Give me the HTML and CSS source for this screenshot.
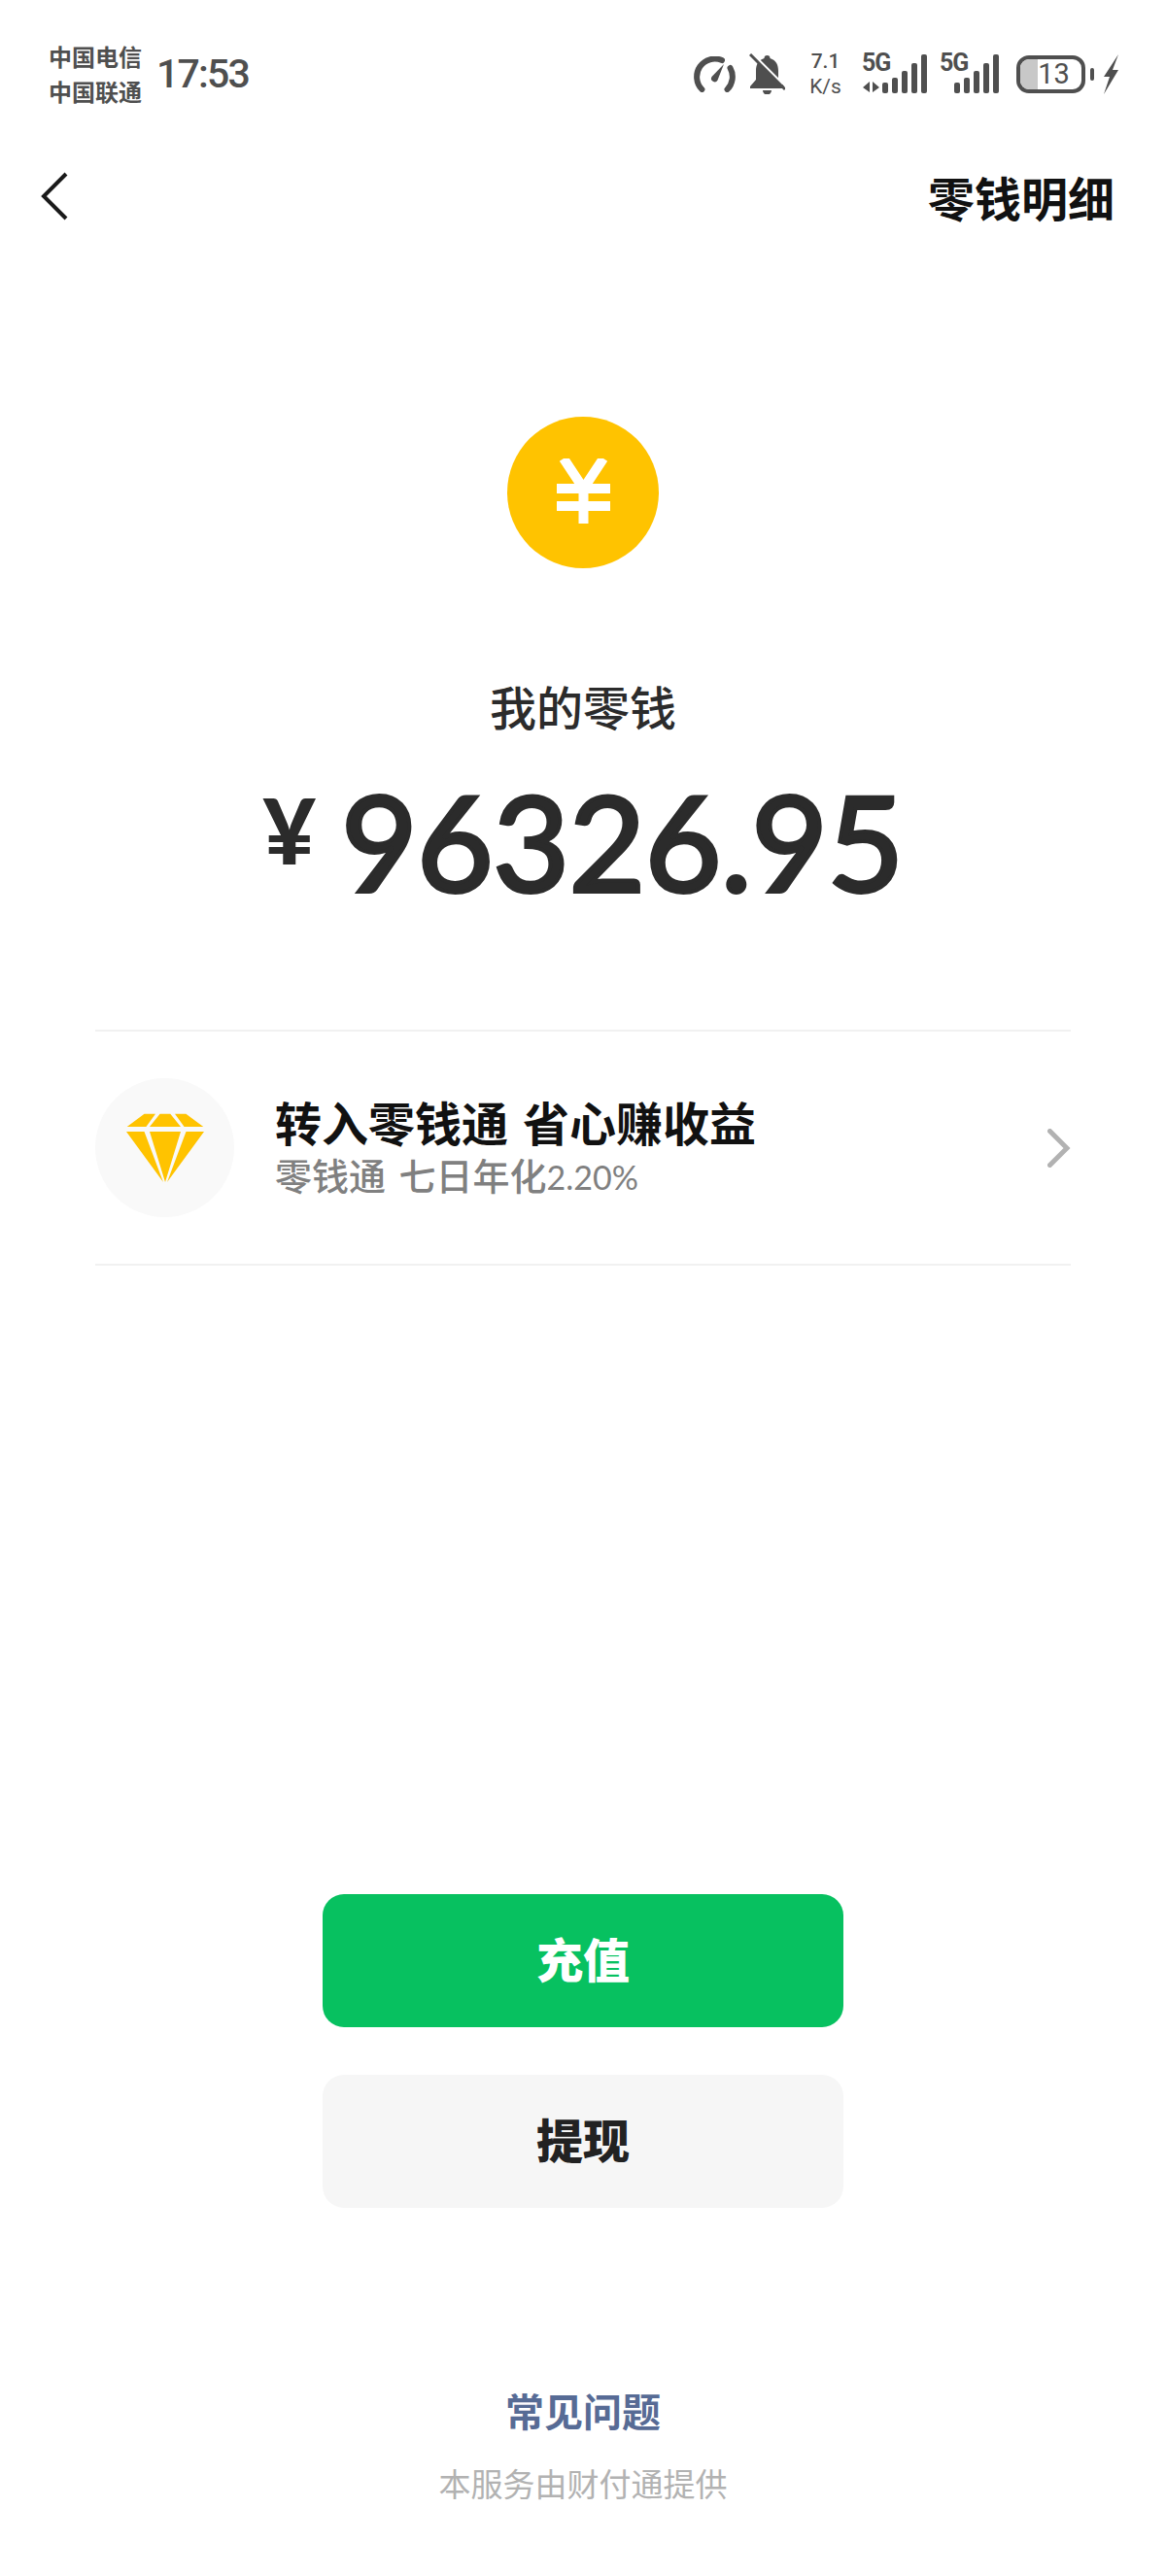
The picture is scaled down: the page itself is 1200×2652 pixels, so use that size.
FILE: index.html
```html
<!DOCTYPE html>
<html lang="zh-CN">
<head>
<meta charset="utf-8">
<title>我的零钱</title>
<link rel="stylesheet" href="styles.css">
</head>
<body>
<div class="page">
  <header class="status">
    <div class="carrier"><span>中国电信</span><span>中国联通</span></div>
    <div class="clock">17:53</div>
    <div class="status-icons">
      <svg class="i-speed" viewBox="0 0 43 37" width="43" height="37"><g fill="none" stroke="#4f4f4f" stroke-width="6" stroke-linecap="round"><path d="M8.400 34A18.500 18.500 0 0 1 29 4.100"/><path d="M37.500 12A18.500 18.500 0 0 1 34.500 34"/></g><path d="M18.500 21L31 8l-6.500 16.500a3.300 3.300 0 0 1-6-3.500z" fill="#4f4f4f"/></svg>
      <svg class="i-bell" viewBox="0 0 37 42" width="37" height="42"><path d="M18.500 2c-2 0-3 1.200-3 3C9 7 7 12 7 18v9l-6 7v2h35v-2l-6-7v-9C30 12 28 7 21.500 5c0-1.800-1-3-3-3z" fill="#4f4f4f"/><path d="M14 38h9a4.500 4.500 0 0 1-9 0z" fill="#4f4f4f"/><path d="M-1 -3L34 32" stroke="#fff" stroke-width="4"/><path d="M1 1L37 37" stroke="#4f4f4f" stroke-width="3"/></svg>
      <div class="net"><span class="net-a">7.1</span><span class="net-b">K/s</span></div>
      <div class="sig sig-one">
        <span class="sig-label">5G</span>
        <svg viewBox="0 0 68 40" width="68" height="40"><path d="M1 34l7-6v11zM11 28l7 6-7 5z" fill="#4f4f4f"/><g fill="#4f4f4f"><rect x="21" y="29" width="6" height="11" rx="2"/><rect x="31" y="24" width="6" height="16" rx="2"/><rect x="41" y="17" width="6" height="23" rx="2"/><rect x="51" y="9" width="6" height="31" rx="2"/><rect x="61" y="0" width="6" height="40" rx="2"/></g></svg>
      </div>
      <div class="sig sig-two">
        <span class="sig-label">5G</span>
        <svg viewBox="0 0 61 40" width="61" height="40"><g fill="#4f4f4f"><rect x="15" y="29" width="6" height="11" rx="2"/><rect x="25" y="24" width="6" height="16" rx="2"/><rect x="35" y="17" width="6" height="23" rx="2"/><rect x="45" y="9" width="6" height="31" rx="2"/><rect x="55" y="0" width="6" height="40" rx="2"/></g></svg>
      </div>
      <div class="batt"><div class="batt-fill"></div><span class="batt-num">13</span></div>
      <div class="batt-nub"></div>
      <svg class="i-bolt" viewBox="0 0 15 41" width="15" height="41"><path d="M15 0L0 23h6L0 41 15 16H9z" fill="#4f4f4f"/></svg>
    </div>
  </header>

  <nav class="nav">
    <svg class="back" viewBox="0 0 28 50" width="28" height="50"><path d="M26 2L3 25l23 23" fill="none" stroke="#1a1a1a" stroke-width="4"/></svg>
    <span class="nav-title">零钱明细</span>
  </nav>

  <section class="hero">
    <div class="coin"><svg viewBox="0 0 55 67" width="55" height="67"><path d="M7 0l20.500 31L48 0" fill="none" stroke="#fff" stroke-width="10"/><path d="M0 31h55M0 49h55M27.500 31v36" fill="none" stroke="#fff" stroke-width="10"/></svg></div>
    <div class="hero-label">我的零钱</div>
    <div class="amount"><span class="amount-sym">¥</span><span class="amount-num">96326.95</span></div>
  </section>

  <section class="promo">
    <div class="promo-icon">
      <svg viewBox="0 0 80 73" width="80" height="73"><g fill="#ffc300"><path d="M.7 14L18.500.7H30L20.400 14zM34.600.7h10.700L56 14H24zM50 .7h11.400L79.300 14H59.600zM0 19h18.500L38 71zM24 19h32L40 71zM61.500 19H80L42 71z"/></g></svg>
    </div>
    <div class="promo-text">
      <div class="promo-title">转入零钱通 省心赚收益</div>
      <div class="promo-sub">零钱通 七日年化<span class="rate">2.20%</span></div>
    </div>
    <svg class="promo-arrow" viewBox="0 0 24 40" width="24" height="40"><path d="M2.500 2.500L20 20 2.500 37.500" fill="none" stroke="#b2b2b2" stroke-width="5" stroke-linecap="round"/></svg>
  </section>

  <div class="actions">
    <div class="btn btn-primary"><span class="btn-text">充值</span></div>
    <div class="btn btn-secondary"><span class="btn-text">提现</span></div>
  </div>

  <footer class="foot">
    <div class="faq">常见问题</div>
    <div class="provider">本服务由财付通提供</div>
  </footer>
</div>
</body>
</html>
```

FILE: styles.css
```css
* { box-sizing: border-box; }
html, body { margin: 0; padding: 0; background: #fff; }
body { font-family: "Noto Sans CJK SC", "Noto Sans", sans-serif; }
.page { width: 1200px; height: 2652px; display: flex; flex-direction: column; overflow: hidden; }

.status { display: flex; align-items: center; height: 152px; padding: 40px 49px 40px 50px; color: #4f4f4f; }
.carrier { display: flex; flex-direction: column; width: 98px; font-size: 24px; line-height: 36px; font-weight: 700; white-space: nowrap; }
.clock { margin-left: 13px; font-family: Roboto, sans-serif; font-weight: 500; font-size: 41px; line-height: 50px; letter-spacing: -1.800px; }
.status-icons { display: flex; align-items: center; margin-left: auto; height: 42px; }
.status-icons svg { display: block; flex: none; }
.i-bell { margin-left: 14px; }
.net { display: flex; flex-direction: column; align-items: center; width: 33px; margin-left: 25px; font-family: Roboto, sans-serif; color: #4f4f4f; }
.net-a { font-size: 21px; line-height: 22px; font-weight: 500; }
.net-b { font-size: 21px; line-height: 22px; margin-top: 4px; }
.sig { position: relative; height: 40px; flex: none; }
.sig-one { width: 68px; margin-left: 21px; }
.sig-two { width: 61px; margin-left: 12px; }
.sig-label { position: absolute; left: 0; top: -2px; font-family: Roboto, sans-serif; font-weight: 700; font-size: 25px; line-height: 22px; letter-spacing: -1px; color: #4f4f4f; }
.batt { display: flex; align-items: stretch; width: 71px; height: 39px; margin-left: 18px; border: 4px solid #4f4f4f; border-radius: 13px; overflow: hidden; }
.batt-fill { width: 18px; background: #c8c8c8; }
.batt-num { flex: 1; text-align: center; font-family: Roboto, sans-serif; font-size: 29px; line-height: 31px; color: #4f4f4f; padding-right: 12px; }
.batt-nub { width: 4px; height: 13px; margin-left: 5px; background: #4f4f4f; border-radius: 2px; }
.i-bolt { margin-left: 10px; }

.nav { display: flex; align-items: center; justify-content: space-between; height: 60px; margin-top: 20px; padding: 0 53px 0 42px; }
.back { display: block; }
.nav-title { font-size: 48px; line-height: 60px; font-weight: 700; color: #111; }

.hero { display: flex; flex-direction: column; align-items: center; padding-top: 197px; }
.coin { display: flex; align-items: center; justify-content: center; width: 156px; height: 156px; border-radius: 50%; background: #ffc300; }
.coin svg { display: block; margin-top: -3px; }
.hero-label { margin-top: 111px; font-size: 48px; line-height: 60px; color: #2b2b2b; font-weight: 500; }
.amount { margin-top: 28px; height: 154px; line-height: 140px; color: #2b2b2b; font-family: Lato, sans-serif; white-space: nowrap; }
.amount-sym { font-size: 94px; font-weight: 900; margin-right: 26px; vertical-align: 28px; }
.amount-num { font-size: 136px; letter-spacing: -0.700px; -webkit-text-stroke: 4px #2b2b2b; }

.promo { display: flex; align-items: center; height: 243px; margin: 122px 98px 0; border-top: 2px solid #f1f1f1; border-bottom: 2px solid #f1f1f1; }
.promo-icon { display: flex; align-items: center; justify-content: center; flex: none; width: 143px; height: 143px; border-radius: 50%; background: #f9f9f9; }
.promo-icon svg { display: block; margin-top: 2px; }
.promo-text { margin-left: 42px; margin-top: -4px; }
.promo-title { font-size: 48px; line-height: 58px; font-weight: 700; color: #111; word-spacing: 4px; white-space: nowrap; }
.promo-sub { font-size: 38px; line-height: 44px; margin-top: 4px; color: #808080; font-weight: 500; word-spacing: 5px; white-space: nowrap; }
.rate { font-family: Lato, sans-serif; font-size: 34px; font-weight: 400; }
.promo-arrow { display: block; margin-left: auto; }

.actions { display: flex; flex-direction: column; gap: 49px; width: 536px; margin: 647px auto 0; }
.btn { height: 137px; border-radius: 22px; display: flex; align-items: center; justify-content: center; font-size: 48px; font-weight: 900; padding-bottom: 7px; }
.btn-primary { background: #07c160; color: #fff; }
.btn-secondary { background: #f6f6f6; color: #222; }

.foot { display: flex; flex-direction: column; align-items: center; margin-top: 183px; }
.faq { font-size: 40px; line-height: 50px; font-weight: 700; color: #576b95; }
.provider { margin-top: 30px; font-size: 33px; line-height: 40px; color: #b2b2b2; }
```
